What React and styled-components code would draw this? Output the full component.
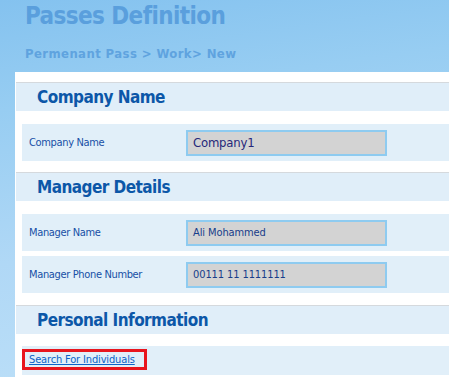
import React from "react";
import styled, { createGlobalStyle } from "styled-components";

const Global = createGlobalStyle`
  html, body { margin: 0; padding: 0; }
  body {
    width: 449px;
    height: 377px;
    overflow: hidden;
    font-family: "DejaVu Sans Condensed", "DejaVu Sans", sans-serif;
  }
`;

const Page = styled.div`
  height: 377px;
  box-sizing: border-box;
  padding-left: 15px;
  background: linear-gradient(172deg, #84c2ef 0%, #97cdf2 25%, #b0d8f6 60%, #bde0f8 100%);
  display: flex;
  flex-direction: column;
`;

const Heading = styled.div`
  padding: 2px 0 0 10px;
  height: 72px;
  box-sizing: border-box;
`;

const Title = styled.h1`
  margin: 0;
  font-size: 24px;
  line-height: 28px;
  font-weight: bold;
  letter-spacing: -0.6px;
  color: #5a9fdd;
`;

const Crumbs = styled.div`
  margin-top: 16px;
  font-size: 13px;
  line-height: 16px;
  font-weight: bold;
  letter-spacing: 0.4px;
  color: #5fa3df;
`;

const Panel = styled.div`
  flex: 1;
  background: #ffffff;
  padding: 10px 0 0 1px;
  display: flex;
  flex-direction: column;
`;

const SectionHeader = styled.div`
  border-top: 1px solid #d5d9dd;
  background: #e0eef9;
  height: 28px;
  display: flex;
  align-items: center;
  padding-left: 21px;
  font-size: 17px;
  font-weight: bold;
  letter-spacing: -0.55px;
  color: #0c57a8;
  margin-bottom: ${(p) => p.$after}px;
`;

const Row = styled.div`
  margin-left: 6px;
  height: ${(p) => (p.$tall ? 29 : 37)}px;
  background: #e1eff9;
  display: flex;
  align-items: center;
  margin-bottom: ${(p) => p.$after || 0}px;
`;

const Label = styled.div`
  width: 157px;
  padding-left: 7px;
  font-size: 11px;
  letter-spacing: -0.35px;
  color: #1750a6;
`;

const Field = styled.div`
  width: 201px;
  height: 26px;
  box-sizing: border-box;
  border: 2px solid #8ecbf0;
  background: #d3d3d3;
  display: flex;
  align-items: center;
  padding-left: ${(p) => (p.$big ? 5 : 5)}px;
  font-size: ${(p) => (p.$big ? 13 : 11)}px;
  letter-spacing: ${(p) => (p.$big ? -0.2 : -0.1)}px;
  color: ${(p) => (p.$big ? "#26287a" : "#173d8a")};
`;

const LinkBox = styled.div`
  margin-top: 3px;
  align-self: flex-start;
  border: 3px solid #e8151d;
  padding: 1px 9px 2px 4px;
  height: 21px;
  box-sizing: border-box;
  display: flex;
  align-items: center;
`;

const Link = styled.a`
  font-size: 11px;
  letter-spacing: -0.15px;
  color: #0b63c8;
  text-decoration: underline;
  cursor: pointer;
`;

export default function App() {
  return (
    <>
      <Global />
      <Page>
        <Heading>
          <Title>Passes Definition</Title>
          <Crumbs>Permenant Pass &gt; Work&gt; New</Crumbs>
        </Heading>
        <Panel>
          <SectionHeader $after={13}>Company Name</SectionHeader>
          <Row $after={11}>
            <Label>Company Name</Label>
            <Field $big>Company1</Field>
          </Row>
          <SectionHeader $after={13}>Manager Details</SectionHeader>
          <Row $after={5}>
            <Label>Manager Name</Label>
            <Field>Ali Mohammed</Field>
          </Row>
          <Row $after={12}>
            <Label>Manager Phone Number</Label>
            <Field>00111 11 1111111</Field>
          </Row>
          <SectionHeader $after={12}>Personal Information</SectionHeader>
          <Row $tall>
            <LinkBox>
              <Link>Search For Individuals</Link>
            </LinkBox>
          </Row>
        </Panel>
      </Page>
    </>
  );
}
